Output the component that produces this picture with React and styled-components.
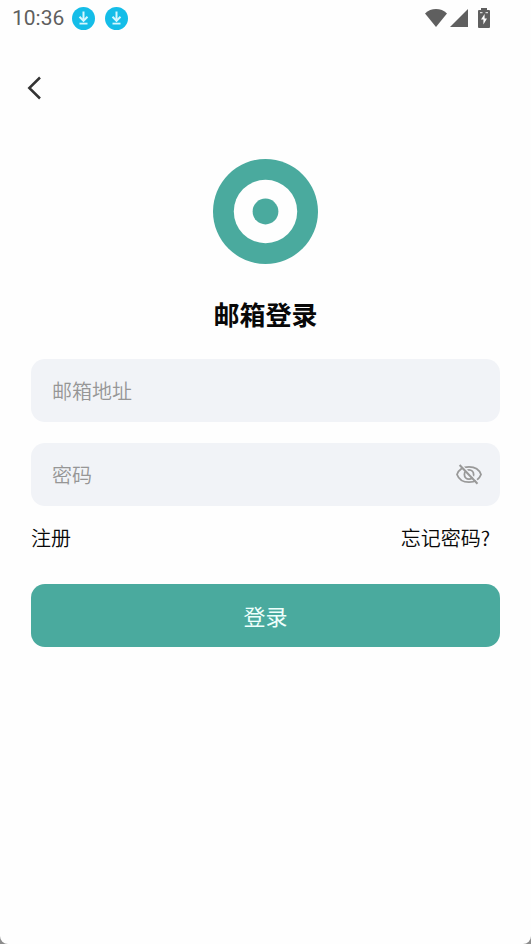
import React, { useState } from 'react'
import styled, { createGlobalStyle } from 'styled-components'

const GlobalStyle = createGlobalStyle`
  * {
    box-sizing: border-box;
  }

  body {
    margin: 0;
    background: #8c8c8c;
    font-family: "Noto Sans CJK SC", "Noto Sans", sans-serif;
  }

  button, input {
    font-family: inherit;
  }
`

const Screen = styled.div`
  display: flex;
  flex-direction: column;
  min-height: 100vh;
  background: #fefefe;
  border-radius: 0 0 8px 8px;
`

const StatusBar = styled.header`
  display: flex;
  align-items: center;
  justify-content: space-between;
  height: 36px;
  padding: 0 41px 0 12px;
  color: #5f5f5f;
`

const StatusGroup = styled.div`
  display: flex;
  align-items: center;
  gap: ${props => props.$gap}px;
`

const Time = styled.span`
  font-family: Roboto, sans-serif;
  font-size: 21px;
  line-height: 24px;
`

const NavBar = styled.nav`
  display: flex;
  align-items: center;
  height: 104px;
  padding: 0 20px;
`

const IconButton = styled.button`
  display: flex;
  align-items: center;
  justify-content: center;
  width: 28px;
  height: 28px;
  padding: 0;
  border: 0;
  background: none;
  color: ${props => props.$color};
  cursor: pointer;
`

const Main = styled.main`
  display: flex;
  flex-direction: column;
  align-items: center;
  padding: 19px 31px 32px;
`

const Title = styled.h1`
  margin: 30px 0 25px;
  color: #080808;
  font-size: 26px;
  font-weight: 700;
  line-height: 40px;
`

const Form = styled.form`
  display: flex;
  flex-direction: column;
  width: 100%;
`

const Field = styled.div`
  display: flex;
  align-items: center;
  height: 63px;
  margin-bottom: ${props => props.$gap}px;
  padding: 0 17px 0 21px;
  border-radius: 14px;
  background: #f1f3f7;
`

const Input = styled.input`
  flex: 1;
  min-width: 0;
  height: 100%;
  padding: 0;
  border: 0;
  outline: none;
  background: none;
  color: #111;
  font-size: 20px;
  font-weight: 350;

  &::placeholder {
    color: #969696;
    opacity: 1;
  }
`

const Links = styled.div`
  display: flex;
  justify-content: space-between;
  padding-right: 10px;
  margin-bottom: 32px;
`

const TextLink = styled.a`
  color: #080808;
  font-size: 20px;
  font-weight: 350;
  line-height: 28px;
  text-decoration: none;
`

const SubmitButton = styled.button`
  height: 63px;
  padding: 0 0 2px;
  border: 0;
  border-radius: 14px;
  background: #4aaa9e;
  color: #effffc;
  font-size: 22px;
  cursor: pointer;
`

function DownloadIcon() {
  return (
    <svg width="23" height="23" viewBox="0 0 23 23" fill="none">
      <circle cx="11.5" cy="11.5" r="11.5" fill="#14bde8" />
      <path d="M11.5 4.500v7.500" stroke="#d5f7ff" strokeWidth="2" />
      <path d="M7.500 9.800L11.500 13.800L15.500 9.800" stroke="#d5f7ff" strokeWidth="2" />
      <path d="M7.500 16.600h8" stroke="#d5f7ff" strokeWidth="1.800" />
    </svg>
  )
}

function WifiIcon() {
  return (
    <svg width="22" height="18" viewBox="0 0 22 18" fill="currentColor">
      <path d="M11 18L0 4.400C3 1.400 7 0 11 0s8 1.400 11 4.400z" />
    </svg>
  )
}

function SignalIcon() {
  return (
    <svg width="18" height="18" viewBox="0 0 18 18" fill="currentColor">
      <path d="M18 0v18H0z" />
    </svg>
  )
}

function BatteryIcon() {
  return (
    <svg width="12" height="20" viewBox="0 0 12 20">
      <path d="M3 0h6v2h2a1 1 0 0 1 1 1v16a1 1 0 0 1-1 1H1a1 1 0 0 1-1-1V3a1 1 0 0 1 1-1h2z" fill="currentColor" />
      <path d="M2 4h2.500v1.200H2zM7.500 4H10v1.200H7.500z" fill="#d8d8d8" />
      <path d="M6.600 6L3 11.500h2.400V16.500L9 10.500H6.600z" fill="#fefefe" />
    </svg>
  )
}

function BackIcon() {
  return (
    <svg width="14" height="24" viewBox="0 0 14 24" fill="none">
      <path d="M13 1.500L2.300 12L13 22.500" stroke="currentColor" strokeWidth="2.500" />
    </svg>
  )
}

function Logo() {
  return (
    <svg width="105" height="105" viewBox="0 0 106 106">
      <circle cx="53" cy="53" r="53" fill="#4aaa9e" />
      <circle cx="53" cy="53" r="32" fill="#fefefe" />
      <circle cx="53" cy="53" r="13" fill="#4aaa9e" />
    </svg>
  )
}

function EyeIcon({ slashed }) {
  return (
    <svg width="26" height="22" viewBox="0 0 26 22" fill="none" stroke="currentColor" strokeWidth="1.800">
      <path d="M1 10.500C2.800 5.500 7.500 2.900 13 2.900S23.200 5.500 25 10.500C23.200 15.500 18.500 18.200 13 18.200S2.800 15.500 1 10.500z" />
      <circle cx="13" cy="10.500" r="4.600" />
      {slashed && <path d="M5.500 1L23.200 19" stroke="#f1f3f7" strokeWidth="1.600" />}
      {slashed && <path d="M3.600 1L21.500 19.800" strokeWidth="2" />}
    </svg>
  )
}

function App() {
  const [visible, setVisible] = useState(false)

  return (
    <Screen>
      <GlobalStyle />
      <StatusBar>
        <StatusGroup $gap={8}>
          <Time>10:36</Time>
          <StatusGroup $gap={10}>
            <DownloadIcon />
            <DownloadIcon />
          </StatusGroup>
        </StatusGroup>
        <StatusGroup $gap={3}>
          <WifiIcon />
          <StatusGroup $gap={10}>
            <SignalIcon />
            <BatteryIcon />
          </StatusGroup>
        </StatusGroup>
      </StatusBar>

      <NavBar>
        <IconButton type="button" aria-label="返回" $color="#333">
          <BackIcon />
        </IconButton>
      </NavBar>

      <Main>
        <Logo />
        <Title>邮箱登录</Title>
        <Form onSubmit={e => e.preventDefault()}>
          <Field $gap={21}>
            <Input type="email" placeholder="邮箱地址" aria-label="邮箱地址" />
          </Field>
          <Field $gap={18}>
            <Input type={visible ? 'text' : 'password'} placeholder="密码" aria-label="密码" />
            <IconButton
              type="button"
              aria-label="显示密码"
              $color="#999"
              onClick={() => setVisible(!visible)}
            >
              <EyeIcon slashed={!visible} />
            </IconButton>
          </Field>
          <Links>
            <TextLink href="#register">注册</TextLink>
            <TextLink href="#forgot">忘记密码?</TextLink>
          </Links>
          <SubmitButton type="submit">登录</SubmitButton>
        </Form>
      </Main>
    </Screen>
  )
}

export default App
